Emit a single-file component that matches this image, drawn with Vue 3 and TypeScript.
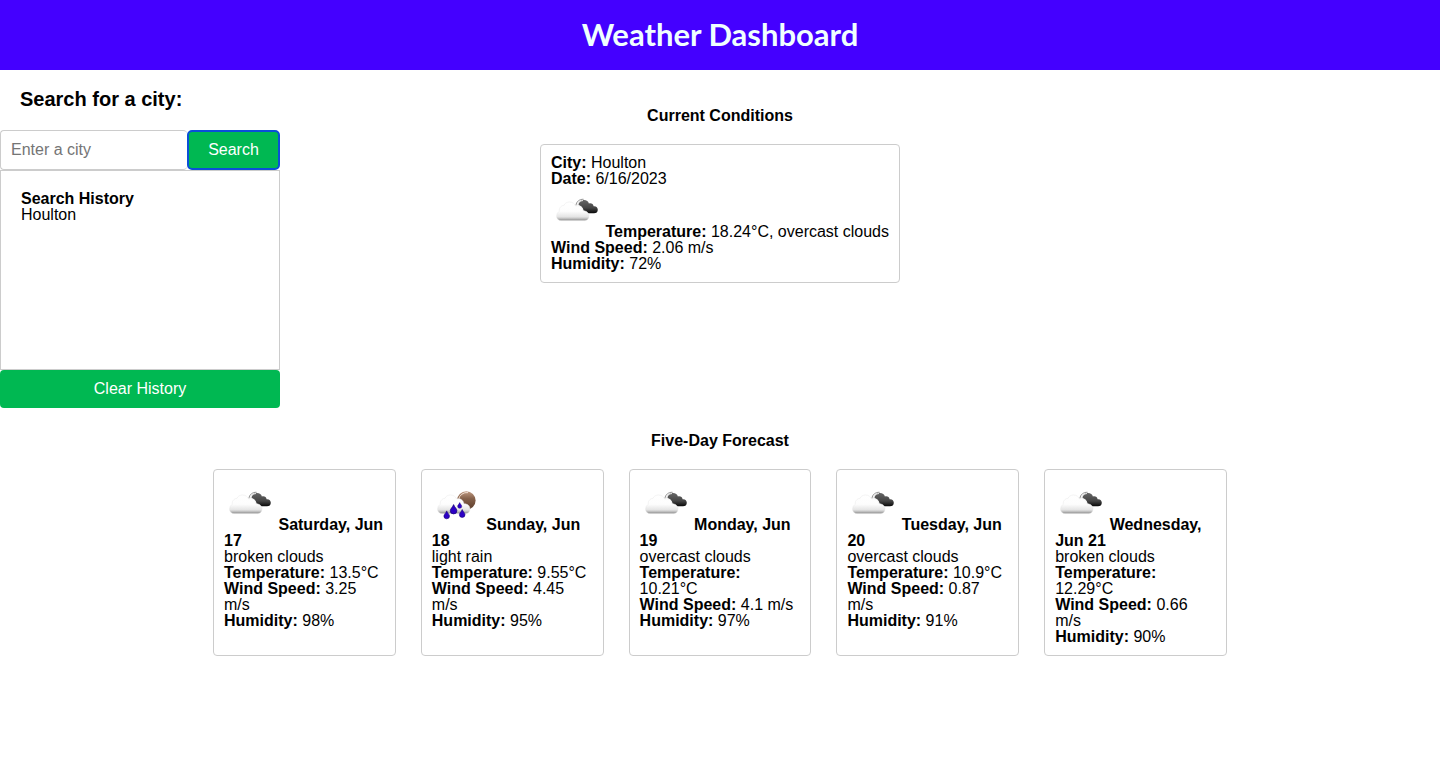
<script setup lang="ts">
import { ref } from 'vue'

interface ForecastDay {
  date: string
  icon: 'clouds' | 'rain'
  description: string
  temperature: string
  wind: string
  humidity: string
}

const city = ref('')
const history = ref<string[]>(['Houlton'])

const forecast: ForecastDay[] = [
  { date: 'Saturday, Jun 17', icon: 'clouds', description: 'broken clouds', temperature: '13.5', wind: '3.25', humidity: '98' },
  { date: 'Sunday, Jun 18', icon: 'rain', description: 'light rain', temperature: '9.55', wind: '4.45', humidity: '95' },
  { date: 'Monday, Jun 19', icon: 'clouds', description: 'overcast clouds', temperature: '10.21', wind: '4.1', humidity: '97' },
  { date: 'Tuesday, Jun 20', icon: 'clouds', description: 'overcast clouds', temperature: '10.9', wind: '0.87', humidity: '91' },
  { date: 'Wednesday, Jun 21', icon: 'clouds', description: 'broken clouds', temperature: '12.29', wind: '0.66', humidity: '90' },
]

function search(): void {
  const name = city.value.trim()
  if (name) history.value.push(name)
  city.value = ''
}

function clearHistory(): void {
  history.value = []
}
</script>

<template>
  <svg class="defs" aria-hidden="true">
    <defs>
      <linearGradient id="white-cloud" x1="0" y1="0" x2="0" y2="1">
        <stop offset="0" stop-color="#ffffff" />
        <stop offset="0.5" stop-color="#fdfdfd" />
        <stop offset="0.8" stop-color="#e4e4e4" />
        <stop offset="0.92" stop-color="#b4b4b4" />
        <stop offset="1" stop-color="#828282" />
      </linearGradient>
      <linearGradient id="dark-cloud" x1="0" y1="0" x2="0" y2="1">
        <stop offset="0" stop-color="#666666" />
        <stop offset="0.6" stop-color="#454545" />
        <stop offset="1" stop-color="#080808" />
      </linearGradient>
      <linearGradient id="moon" x1="0" y1="0" x2="0" y2="1">
        <stop offset="0" stop-color="#c09a82" />
        <stop offset="0.4" stop-color="#85614b" />
        <stop offset="1" stop-color="#5a3a28" />
      </linearGradient>
      <path id="cloud-shape" d="M10 33.6C7.3 33.6 5.6 31.6 5.6 29.2C5.6 26.8 6.6 25.2 8.3 24.4C7.8 21.2 9.8 18.5 12.8 18.5C13.6 16.3 16 15 18.5 15C21.5 15 23.8 16.8 24.5 19C28.2 17.8 31.6 20 32 23.8C35.6 23.6 38 25.9 38 28.9C38 31.8 36 33.6 33.5 33.6Z" />
      <path id="drop" d="M0 -4.6C0.8 -2 3.3 -0.6 3.3 1.5A3.3 3.2 0 0 1 -3.3 1.5C-3.3 -0.6 -0.8 -2 0 -4.6Z" />
      <symbol id="icon-clouds" viewBox="0 0 50 50">
        <path d="M27.5 18C27.5 14.8 30 12.7 33 12.9C35.6 13 37.4 14.4 37.9 16.4C40.2 15.6 42.4 17 42.6 19.2C45.2 18.9 46.8 20.5 46.8 22.7C46.8 25 45.3 26.3 43 26.3H34.3C33.6 25.5 33 24.6 32.6 23.4C32 20.6 30 18.6 27.5 18Z" fill="url(#dark-cloud)" />
        <path d="M25 18.4C25.2 14.8 28.4 12 32.6 12.3" fill="none" stroke="#777" stroke-width="0.8" />
        <path d="M26.6 18C27 15.4 29 13.7 32 13.5" fill="none" stroke="#e8e8e8" stroke-width="1" />
        <use href="#cloud-shape" fill="url(#white-cloud)" stroke="#e4e4e4" stroke-width="0.4" />
      </symbol>
      <symbol id="icon-rain" viewBox="0 0 50 50">
        <circle cx="34.3" cy="20.5" r="9.3" fill="url(#moon)" />
        <path d="M26.6 19.5A8.4 8.4 0 0 1 36 12.6" fill="none" stroke="#f0e0d4" stroke-width="1" />
        <use href="#cloud-shape" fill="url(#white-cloud)" stroke="#e4e4e4" stroke-width="0.4" />
        <g fill="#2c00c4" stroke="#170078" stroke-width="0.7">
          <use href="#drop" transform="translate(21.6 29.2)" />
          <use href="#drop" transform="translate(27.7 25.4) scale(0.62)" />
          <use href="#drop" transform="translate(30.2 33.4) scale(0.85)" />
          <use href="#drop" transform="translate(14.7 34.8) scale(0.85)" />
        </g>
      </symbol>
    </defs>
  </svg>

  <header class="banner">
    <h1>Weather Dashboard</h1>
  </header>

  <main>
    <div class="top">
      <aside>
        <label class="search-label" for="city">Search for a city:</label>
        <form class="search" @submit.prevent="search">
          <input id="city" v-model="city" type="text" placeholder="Enter a city" />
          <button class="search-button" type="submit">Search</button>
        </form>
        <section class="history">
          <h2>Search History</h2>
          <div v-for="item in history" :key="item">{{ item }}</div>
        </section>
        <button class="clear-button" type="button" @click="clearHistory">Clear History</button>
      </aside>

      <section class="current">
        <h2 class="section-title">Current Conditions</h2>
        <div class="card">
          <div><b>City:</b> Houlton</div>
          <div><b>Date:</b> 6/16/2023</div>
          <div>
            <svg class="icon" role="img" aria-label="overcast clouds"><use href="#icon-clouds" /></svg> <b>Temperature:</b> 18.24°C, overcast clouds
          </div>
          <div><b>Wind Speed:</b> 2.06 m/s</div>
          <div><b>Humidity:</b> 72%</div>
        </div>
      </section>
    </div>

    <section class="forecast">
      <h2 class="section-title">Five-Day Forecast</h2>
      <div class="days">
        <article v-for="day in forecast" :key="day.date" class="card">
          <div>
            <svg class="icon" role="img" :aria-label="day.description"><use :href="`#icon-${day.icon}`" /></svg> <b>{{ day.date }}</b>
          </div>
          <div>{{ day.description }}</div>
          <div><b>Temperature:</b> {{ day.temperature }}°C</div>
          <div><b>Wind Speed:</b> {{ day.wind }} m/s</div>
          <div><b>Humidity:</b> {{ day.humidity }}%</div>
        </article>
      </div>
    </section>
  </main>
</template>

<style>
body {
  margin: 0;
  background: #fff;
  color: #000;
  font: 16px/16px "Liberation Sans", Arial, sans-serif;
}
</style>

<style scoped>
.defs {
  position: absolute;
  width: 0;
  height: 0;
}

h1,
h2 {
  margin: 0;
}

.banner {
  padding: 14px 15px 16px;
  background: #40f;
  color: azure;
  text-align: center;
}

.banner h1 {
  font: bold 31px/40px "Trebuchet MS", Lato, sans-serif;
}

.top {
  display: grid;
  grid-template-columns: 280px 1fr 280px;
}

.search-label {
  display: block;
  padding: 19px 20px 21px;
  font-size: 20px;
  font-weight: bold;
  line-height: 20px;
}

.search {
  display: flex;
}

input,
button {
  box-sizing: border-box;
  font: inherit;
}

input {
  flex: 1;
  min-width: 0;
  height: 40px;
  padding: 10px;
  border: 1px solid #ccc;
  border-right: 0;
  border-radius: 4px;
  color: inherit;
}

input::placeholder {
  color: #757575;
}

button {
  border: 0;
  border-radius: 4px;
  background: #00b852;
  color: #fff;
  cursor: pointer;
}

.search-button {
  width: 93px;
  padding: 0;
  border: 2px solid #0a4fd8;
  border-radius: 5px;
}

.history {
  box-sizing: border-box;
  height: 200px;
  padding: 20px;
  overflow: auto;
  border: 1px solid #ccc;
}

.history h2,
.section-title {
  font-size: 16px;
  line-height: 16px;
}

.clear-button {
  display: block;
  width: 100%;
  height: 38px;
}

.current {
  padding-top: 38px;
}

.section-title {
  margin-bottom: 20px;
  text-align: center;
}

.card {
  box-sizing: border-box;
  padding: 10px;
  border: 1px solid #ccc;
  border-radius: 4px;
}

.current .card {
  width: 360px;
  margin: 0 auto;
}

.icon {
  width: 50px;
  height: 50px;
  vertical-align: baseline;
}

.forecast {
  padding: 25px 213px;
}

.days {
  display: grid;
  grid-template-columns: repeat(5, 1fr);
  gap: 25px;
}
</style>
